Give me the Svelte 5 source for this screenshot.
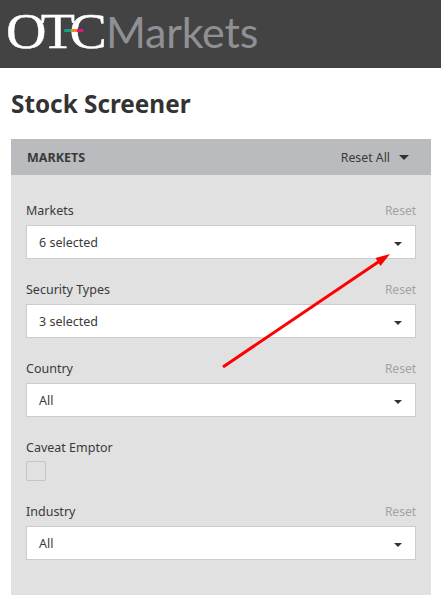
<script>
    const fields = [
        { label: "Markets", value: "6 selected" },
        { label: "Security Types", value: "3 selected" },
        { label: "Country", value: "All" },
    ];
</script>

<div class="page">
    <header class="topbar">
        <div class="logo">
            <span class="otc">OTC<i class="bar"></i></span><span class="markets">Markets</span>
        </div>
    </header>

    <h1>Stock Screener</h1>

    <section class="panel">
        <div class="panel-head">
            <span class="panel-title">MARKETS</span>
            <span class="reset-all">Reset All <i class="caret big"></i></span>
        </div>
        <div class="panel-body">
            {#each fields as field}
                <div class="field">
                    <div class="field-head">
                        <span class="label">{field.label}</span>
                        <span class="reset">Reset</span>
                    </div>
                    <div class="select">
                        <span>{field.value}</span>
                        <i class="caret"></i>
                    </div>
                </div>
            {/each}

            <div class="field check-field">
                <div class="field-head">
                    <span class="label">Caveat Emptor</span>
                </div>
                <div class="checkbox"></div>
            </div>

            <div class="field">
                <div class="field-head">
                    <span class="label">Industry</span>
                    <span class="reset">Reset</span>
                </div>
                <div class="select">
                    <span>All</span>
                    <i class="caret"></i>
                </div>
            </div>
        </div>
    </section>

    <svg class="annotation" width="441" height="610" viewBox="0 0 441 610">
        <line x1="223" y1="367" x2="379" y2="261.5" stroke="#fe0000" stroke-width="3" />
        <polygon points="390,254 375.5,258 380.5,266" fill="#fe0000" />
    </svg>
</div>

<style>
    :global(body) {
        margin: 0;
        background: #fff;
    }

    .page {
        position: relative;
        width: 441px;
        height: 610px;
        overflow: hidden;
        font-family: "Noto Sans", "Open Sans", sans-serif;
        color: #3a3a3a;
    }

    .topbar {
        height: 68px;
        background: #434343;
        box-sizing: border-box;
        padding: 8px 0 0 6px;
    }

    .logo {
        display: flex;
        align-items: baseline;
        line-height: 46px;
    }

    .otc {
        position: relative;
        font-family: "Liberation Serif", serif;
        font-size: 50px;
        letter-spacing: -5px;
        color: #fff;
        width: 102px;
        margin-right: -2px;
        transform: scaleX(1.12);
        transform-origin: left;
        -webkit-text-stroke: 0.4px #fff;
    }

    .bar {
        position: absolute;
        left: 52px;
        top: 21px;
        width: 17px;
        height: 3px;
        background: linear-gradient(90deg, #0fa58c 0 33%, #ee8a1d 33% 66%, #e6127f 66%);
    }

    .markets {
        font-family: "Lato", sans-serif;
        font-size: 43px;
        font-weight: 400;
        color: #8f9094;
        letter-spacing: -0.2px;
    }

    h1 {
        margin: 0;
        padding: 20px 0 0 11px;
        height: 51px;
        box-sizing: border-box;
        font-size: 24.3px;
        line-height: 32px;
        font-weight: 700;
        color: #333;
    }

    .panel {
        margin: 20px 10px 0 11px;
        height: 456px;
        background: #e1e1e1;
    }

    .panel-head {
        display: flex;
        justify-content: space-between;
        align-items: center;
        height: 36px;
        padding: 0 22px 0 16px;
        background: #babbbe;
        font-size: 12.5px;
    }

    .panel-title {
        font-weight: 700;
    }

    .reset-all {
        display: flex;
        align-items: center;
        gap: 9px;
        font-size: 12.3px;
    }

    .panel-body {
        padding: 25px 15px 0;
    }

    .field {
        height: 79px;
    }

    .check-field {
        height: 64px;
    }

    .field-head {
        display: flex;
        justify-content: space-between;
        align-items: center;
        height: 20px;
        margin-bottom: 5px;
        font-size: 12.5px;
    }

    .reset {
        color: #a3a3a3;
        font-size: 12px;
    }

    .select {
        display: flex;
        justify-content: space-between;
        align-items: center;
        height: 34px;
        box-sizing: border-box;
        padding: 0 13px 0 12px;
        background: #fff;
        border: 1px solid #ccc;
        font-size: 12.5px;
    }

    .caret {
        display: block;
        width: 0;
        height: 0;
        margin-top: 3px;
        border-left: 4px solid transparent;
        border-right: 4px solid transparent;
        border-top: 4px solid #333;
    }

    .caret.big {
        margin-top: 0;
        border-left-width: 5px;
        border-right-width: 5px;
        border-top-width: 5px;
    }

    .checkbox {
        width: 20px;
        height: 20px;
        box-sizing: border-box;
        margin-top: -1px;
        border: 1px solid #c4c4c4;
        border-radius: 2px;
    }

    .annotation {
        position: absolute;
        left: 0;
        top: 0;
    }
</style>
